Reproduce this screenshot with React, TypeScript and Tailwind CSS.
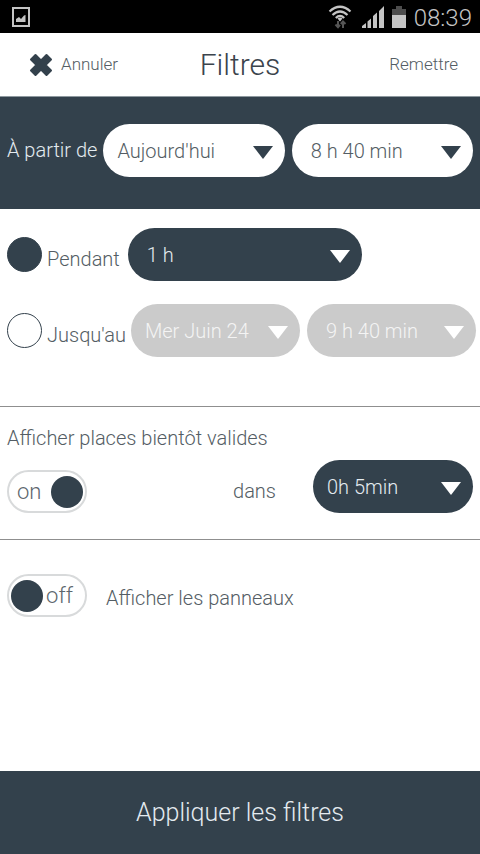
import { useState } from "react";
import type { ReactNode } from "react";
import clsx from "clsx";

type PillProps = {
  label: string;
  options: string[];
  tone: "light" | "dark";
  disabled?: boolean;
  wide?: boolean;
  className?: string;
};

function PillSelect({ label, options, tone, disabled, wide, className }: PillProps) {
  return (
    <div className={clsx("relative h-[53px] min-w-0", className)}>
      <select
        aria-label={label}
        disabled={disabled}
        className={clsx(
          "h-full w-full appearance-none rounded-full pr-9 text-[20px] font-light opacity-100 outline-none",
          wide ? "pl-[19px]" : "pl-[14px]",
          tone === "light" && "bg-white text-[#545d64]",
          tone === "dark" && !disabled && "bg-[#33414c] text-[#e4ebf0]",
          disabled && "bg-[#cbcbcb] text-[#f4f4f4]",
        )}
      >
        {options.map((option) => (
          <option key={option}>{option}</option>
        ))}
      </select>
      <svg
        aria-hidden="true"
        viewBox="0 0 20 13"
        className={clsx(
          "pointer-events-none absolute top-[22px] right-3 h-[13px] w-5",
          tone === "light" ? "fill-[#33414c]" : "fill-white",
        )}
      >
        <path d="M0 0H20L10 13Z" />
      </svg>
    </div>
  );
}

function Toggle({ id, label, initial }: { id: string; label: string; initial: boolean }) {
  const [on, setOn] = useState(initial);
  return (
    <label
      htmlFor={id}
      className={clsx(
        "flex h-[43px] w-20 shrink-0 cursor-pointer items-center justify-between rounded-full border-2 border-[#d8dadb] text-[22px] font-light text-[#5d666d]",
        on ? "pr-0.5 pl-2" : "flex-row-reverse pr-3 pl-0.5",
      )}
    >
      <input
        id={id}
        type="checkbox"
        role="switch"
        aria-label={label}
        checked={on}
        onChange={() => setOn(!on)}
        className="sr-only"
      />
      <span>{on ? "on" : "off"}</span>
      <span className="size-8 rounded-full bg-[#33414c]" />
    </label>
  );
}

function ModeRow({
  id,
  label,
  checked,
  onSelect,
  children,
}: {
  id: string;
  label: string;
  checked: boolean;
  onSelect: () => void;
  children: ReactNode;
}) {
  return (
    <div className="flex items-center">
      <input
        id={id}
        type="radio"
        name="mode"
        checked={checked}
        onChange={onSelect}
        className="size-[35px] shrink-0 appearance-none rounded-full border border-[#33414c] bg-white checked:bg-[#33414c]"
      />
      <label htmlFor={id} className="shrink-0 pt-2 pl-[5px] text-[20px] font-light">
        {label}
      </label>
      {children}
    </div>
  );
}

function StatusBar() {
  return (
    <div className="flex h-[33px] items-center bg-black pr-2 pl-3 text-[#c4c4c4]">
      <svg aria-hidden="true" viewBox="0 0 18 20" className="h-5 w-[18px]">
        <rect x="1" y="1" width="16" height="18" fill="none" stroke="currentColor" strokeWidth="2" />
        <path d="M4 15V12L7 10L9 12L12 8.500L13.500 8V15Z" fill="currentColor" />
      </svg>
      <div className="ml-auto flex items-center">
        <svg aria-hidden="true" viewBox="0 0 24 24" className="h-6 w-6" fill="none">
          <path
            d="M1.500 6.500Q12 -3 22.500 6.500M4.500 10Q12 3 19.500 10M7.800 13Q12 8.800 16.200 13"
            stroke="currentColor"
            strokeWidth="2.200"
          />
          <path d="M9.500 13.500Q12 11.500 14.500 13.500L12 16.500Z" fill="currentColor" />
          <path d="M10 16V22M7.500 19.500L10 22.300L12 19.800M15 23V17M12.800 19L15 16.500L17.500 19" stroke="#555" strokeWidth="2" />
        </svg>
        <svg aria-hidden="true" viewBox="0 0 22 22" className="ml-2.5 h-[22px] w-[22px]" fill="currentColor">
          <path d="M0 22V20L4 17V22ZM5.500 22V15.500L9 12.500V22ZM11 22V10L15 6.500V22ZM17 22V5L22 0V22Z" />
        </svg>
        <svg aria-hidden="true" viewBox="0 0 14 22" className="ml-2 h-[22px] w-3.5">
          <path d="M4 0H10V3H14V9H0V3H4Z" fill="#4d4d4d" />
          <path d="M0 9H14V22H0Z" fill="currentColor" />
        </svg>
        <span className="ml-2 pt-0.5 text-[24px]">08:39</span>
      </div>
    </div>
  );
}

export default function App() {
  const [mode, setMode] = useState<"for" | "until">("for");

  return (
    <div className="flex min-h-screen flex-col bg-white font-[Roboto,sans-serif] font-light text-[#545d64]">
      <StatusBar />

      <header className="grid h-16 grid-cols-[1fr_auto_1fr] items-center border-b border-[#8e999f] px-[22px]">
        <button type="button" className="flex items-center gap-2 justify-self-start pl-[7px] text-[17px]">
          <svg aria-hidden="true" viewBox="0 0 24 24" className="size-6">
            <path
              d="M6.500 2L12 7.500L17.500 2L22 6.500L16.500 12L22 17.500L17.500 22L12 16.500L6.500 22L2 17.500L7.500 12L2 6.500Z"
              fill="#33414c"
              stroke="#33414c"
              strokeWidth="2"
              strokeLinejoin="round"
            />
          </svg>
          Annuler
        </button>
        <h1 className="text-[30px] text-[#3b444c]">Filtres</h1>
        <button type="button" className="justify-self-end text-[17px]">
          Remettre
        </button>
      </header>

      <section className="flex items-center bg-[#33414c] px-[7px] pt-[27px] pb-8">
        <span className="shrink-0 pb-0.5 text-[20px] text-[#e4ebf0]">À partir de</span>
        <PillSelect label="Jour de début" options={["Aujourd'hui"]} tone="light" className="ml-[6px] flex-1" />
        <PillSelect label="Heure de début" options={["8 h 40 min"]} tone="light" wide className="ml-[7px] flex-1" />
      </section>

      <fieldset className="flex flex-col gap-[23px] border-b border-[#8f8f8f] pt-[19px] pb-[49px] pl-[7px]">
        <ModeRow id="mode-for" label="Pendant" checked={mode === "for"} onSelect={() => setMode("for")}>
          <PillSelect
            label="Durée"
            options={["1 h"]}
            tone="dark"
            disabled={mode !== "for"}
            wide
            className="mr-[118px] ml-2 flex-1"
          />
        </ModeRow>
        <ModeRow id="mode-until" label="Jusqu'au" checked={mode === "until"} onSelect={() => setMode("until")}>
          <PillSelect
            label="Jour de fin"
            options={["Mer Juin 24"]}
            tone="dark"
            disabled={mode !== "until"}
            className="ml-[5px] flex-1"
          />
          <PillSelect
            label="Heure de fin"
            options={["9 h 40 min"]}
            tone="dark"
            disabled={mode !== "until"}
            wide
            className="mr-1 ml-[7px] flex-1"
          />
        </ModeRow>
      </fieldset>

      <section className="border-b border-[#8f8f8f] px-[7px] pt-4 pb-[26px]">
        <h2 className="text-[20px]">Afficher places bientôt valides</h2>
        <div className="mt-[7px] flex items-end">
          <Toggle id="soon" label="Afficher places bientôt valides" initial />
          <span className="mr-[37px] ml-auto pb-[7px] text-[20px]">dans</span>
          <PillSelect label="Délai" options={["0h 5min"]} tone="dark" className="w-40" />
        </div>
      </section>

      <section className="flex items-center px-[7px] pt-[34px] pb-8">
        <Toggle id="signs" label="Afficher les panneaux" initial={false} />
        <span className="pt-1 pl-[19px] text-[20px]">Afficher les panneaux</span>
      </section>

      <button type="button" className="mt-auto h-[83px] w-full bg-[#33414c] text-[25px] text-[#e4ebf0]">
        Appliquer les filtres
      </button>
    </div>
  );
}
